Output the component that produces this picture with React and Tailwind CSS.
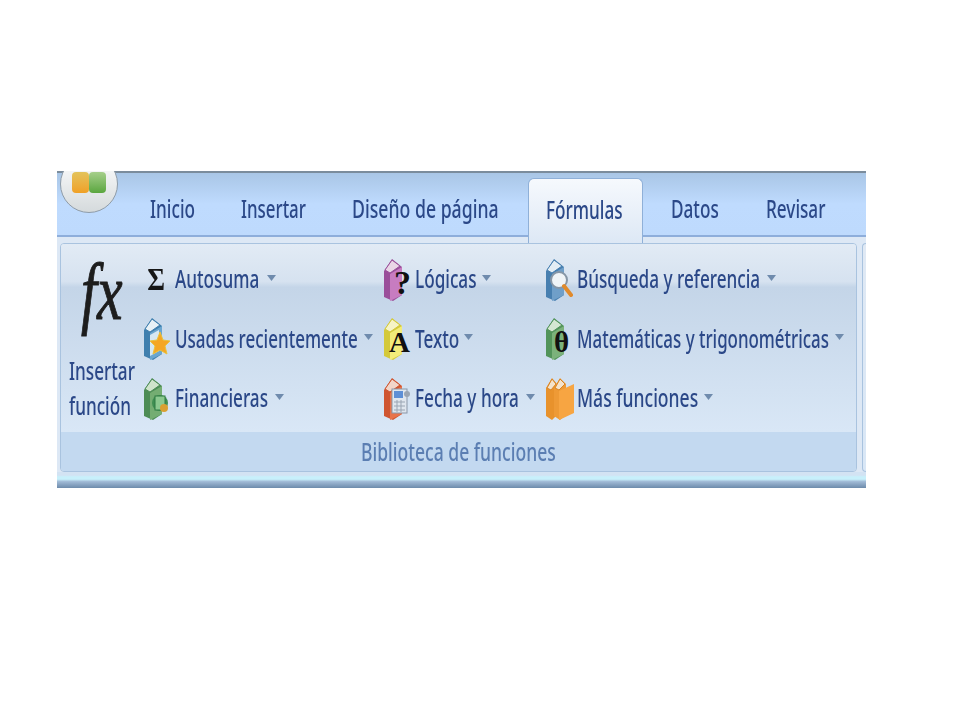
const Label = ({ children, width, scale = 'scale-x-[0.66]', className = 'text-[#2b4888]' }) => (
  <span className={`block ${width} shrink-0`}>
    <span className={`inline-block origin-left ${scale} whitespace-nowrap text-[26px] font-medium leading-[30px] blur-[0.4px] ${className}`}>
      {children}
    </span>
  </span>
);

const Caret = () => (
  <svg width="9" height="6" viewBox="0 0 9 6" className="ml-[6px] shrink-0 mt-[-2px]">
    <path d="M0 0h9L4.5 6z" fill="#6f8bad" />
  </svg>
);

// generic office-2007 book, colour + whatever sits on top
const Book = ({ front, side, page = '#dfe8ef', children }) => (
  <svg width="28" height="46" viewBox="0 0 28 46" className="shrink-0">
    <path d="M1 15 L9 3 L19 11 L19 39 L10 45 L1 41 Z" fill={side} />
    <path d="M7 18 L19 11 L19 39 L7 45 Z" fill={front} />
    <path d="M2 14 L9 4 L17 10 L7 17 Z" fill={page} stroke={side} strokeWidth="1" />
    {children}
  </svg>
);

const BlueStar = () => (
  <Book front="#6ba6cf" side="#3f7fae" page="#e8f1f6">
    <path d="M7 20 L16 15 L16 36 L7 41 Z" fill="#d6e8f2" />
    <path d="M17 17 L20 25 L27 26 L22 31 L24 39 L17 35 L10 39 L12 31 L7 26 L14 25 Z" fill="#f5a623" stroke="#e9c23e" />
  </Book>
);

const GreenMoney = () => (
  <Book front="#74ad72" side="#4d8c55" page="#cfe3cb">
    <circle cx="17" cy="28" r="8" fill="#3f8f52" />
    <rect x="12" y="21" width="10" height="14" fill="#8bc98f" stroke="#2f7a42" />
    <circle cx="21" cy="33" r="4" fill="#d9a032" />
  </Book>
);

const PinkQuestion = () => (
  <Book front="#c77cc0" side="#9a4f9a" page="#e9d6e6">
    <text x="11" y="38" fontFamily="Liberation Serif, serif" fontWeight="700" fontSize="34" fill="#111">?</text>
  </Book>
);

const YellowA = () => (
  <Book front="#f2ec7a" side="#d4c93a" page="#f6f3c6">
    <text x="6" y="37" fontFamily="Liberation Serif, serif" fontWeight="700" fontSize="29" fill="#111">A</text>
  </Book>
);

const RedCalendar = () => (
  <Book front="#e8734a" side="#cf5530" page="#f2d5c8">
    <rect x="9" y="14" width="15" height="24" fill="#dfe6ee" stroke="#8a97a8" />
    <rect x="11" y="16" width="9" height="7" fill="#5d8fd6" />
    <circle cx="24" cy="19" r="3" fill="#9aa5b3" />
    <path d="M11 27h11M11 31h11M11 35h11M14 25v12M18 25v12" stroke="#9aa5b3" strokeWidth="1" />
  </Book>
);

const BlueSearch = () => (
  <Book front="#6f9fc9" side="#477fb0" page="#e3edf4">
    <circle cx="14" cy="24" r="8" fill="#f0f4f7" stroke="#8796a6" strokeWidth="2" />
    <path d="M19 30 L26 39" stroke="#e08a2c" strokeWidth="4" strokeLinecap="round" />
  </Book>
);

const GreenTheta = () => (
  <Book front="#7bb27b" side="#52945a" page="#d5e6d2">
    <text x="9" y="37" fontFamily="Liberation Serif, serif" fontWeight="700" fontSize="29" fill="#111">θ</text>
  </Book>
);

const OrangeBooks = () => (
  <svg width="30" height="46" viewBox="0 0 30 46" className="shrink-0">
    <path d="M1 13 L7 3 L12 9 L12 40 L7 45 L1 41 Z" fill="#e8922c" />
    <path d="M2 13 L7 4 L11 9 L6 15 Z" fill="#f4e3cc" stroke="#d98423" />
    <path d="M9 13 L15 3 L21 9 L21 40 L15 45 L9 41 Z" fill="#ee9a36" />
    <path d="M10 13 L15 4 L20 9 L14 15 Z" fill="#f4e3cc" stroke="#d98423" />
    <path d="M14 16 L29 9 L29 38 L14 45 Z" fill="#f7a542" />
  </svg>
);

const Sigma = () => (
  <span className="block w-[28px] pl-[5px] shrink-0 origin-left scale-x-[0.85] font-['Liberation_Serif',serif] font-bold text-[32px] leading-[30px] text-[#161616]">Σ</span>
);

const Item = ({ icon, label, width, scale }) => (
  <div className="flex items-center h-[59.5px]">
    <div className="w-[32px] shrink-0">{icon}</div>
    <Label width={width} scale={scale}>{label}</Label>
    <Caret />
  </div>
);

export default function App() {
  return (
    <div className="min-h-[720px] bg-white pt-[171px] pl-[57px] font-['Noto_Sans',sans-serif]">
      <div className="relative w-[809px] h-[317px] overflow-hidden">
        {/* office button */}
        <div className="absolute z-10 left-[3px] top-[-16px] w-[58px] h-[58px] rounded-full bg-gradient-to-b from-white to-[#d5dadc] border border-[#8f9ca8] flex items-end justify-center pb-[19px]">
          <div className="flex">
            <div className="w-[17px] h-[21px] rounded-sm bg-gradient-to-b from-[#e3c35a] to-[#f0a024]" />
            <div className="w-[17px] h-[21px] rounded-sm bg-gradient-to-b from-[#a5cf8a] to-[#5aa63e]" />
          </div>
        </div>

        {/* tab strip */}
        <div className="h-[66px] bg-gradient-to-b from-[#a9c6e6] via-[#bfdbfe] to-[#bedafd] border-t-2 border-[#7b8c9c] border-b-2 border-b-[#8eaedb] flex items-center pl-[93px] pt-[8px]">
          <Label width="w-[91px]">Inicio</Label>
          <Label width="w-[111px]" scale="scale-x-[0.65]">Insertar</Label>
          <Label width="w-[176px]" scale="scale-x-[0.68]">Diseño de página</Label>
          <div className="relative z-10 w-[115px] h-[65px] mb-[-8px] shrink-0 self-end rounded-t-md border border-b-0 border-[#8fb0d8] bg-gradient-to-b from-[#f6f9fd] to-[#dde8f5] pl-[17px] pt-[15px]">
            <Label width="w-[80px]">Fórmulas</Label>
          </div>
          <div className="w-[28px] shrink-0" />
          <Label width="w-[95px]">Datos</Label>
          <Label width="w-[60px]">Revisar</Label>
        </div>

        {/* ribbon body */}
        <div className="h-[251px] bg-[#dde8f5] flex flex-col pt-[6px]">
          <div className="flex pl-[3px] h-[229px] shrink-0">
            <div className="w-[797px] h-[229px] shrink-0 rounded border border-[#a9c3df] overflow-hidden flex flex-col">
              <div className="h-[188px] flex bg-[linear-gradient(to_bottom,#e2ebf5_0%,#d6e2f0_20%,#c4d5e8_23%,#d9e7f6_100%)] pt-[5px]">
                <div className="w-[82px] shrink-0 flex flex-col items-center">
                  <span className="block h-[88px] mt-[1px] font-['Liberation_Serif',serif] italic text-[80px] leading-[84px] text-[#1d1d1d] origin-center scale-x-[0.72] [-webkit-text-stroke:1px_#1d1d1d]">fx</span>
                  <div className="flex flex-col items-start mt-[17px] pl-[8px] w-full">
                    <Label width="w-[66px]">Insertar</Label>
                    <span className="h-[4px]" />
                    <Label width="w-[66px]">función</Label>
                  </div>
                </div>
                <div className="w-[240px] shrink-0">
                  <Item icon={<Sigma />} label="Autosuma" width="w-[86px]" />
                  <Item icon={<BlueStar />} label="Usadas recientemente" width="w-[183px]" scale="scale-x-[0.655]" />
                  <Item icon={<GreenMoney />} label="Financieras" width="w-[94px]" />
                </div>
                <div className="w-[162px] shrink-0">
                  <Item icon={<PinkQuestion />} label="Lógicas" width="w-[61px]" />
                  <Item icon={<YellowA />} label="Texto" width="w-[43px]" />
                  <Item icon={<RedCalendar />} label="Fecha y hora" width="w-[105px]" />
                </div>
                <div className="flex-1">
                  <Item icon={<BlueSearch />} label="Búsqueda y referencia" width="w-[184px]" />
                  <Item icon={<GreenTheta />} label="Matemáticas y trigonométricas" width="w-[252px]" scale="scale-x-[0.65]" />
                  <Item icon={<OrangeBooks />} label="Más funciones" width="w-[121px]" scale="scale-x-[0.675]" />
                </div>
              </div>
              <div className="flex-1 bg-[#c3d9f0] flex items-center justify-center">
                <Label width="w-[195px]" scale="scale-x-[0.675]" className="text-[#5b7eb2]">Biblioteca de funciones</Label>
              </div>
            </div>
            <div className="ml-[5px] flex-1 rounded-l border border-r-0 border-[#a9c3df] bg-gradient-to-b from-[#e0e9f4] to-[#d9e7f6]" />
          </div>
          {/* bottom edge */}
          <div className="h-[16px] bg-[linear-gradient(to_bottom,#d3e3f3_0%,#d3e3f3_20%,#c8f0fb_30%,#c8f0fb_45%,#a0bad6_60%,#6d8bab_100%)]" />
        </div>
      </div>
    </div>
  );
}
